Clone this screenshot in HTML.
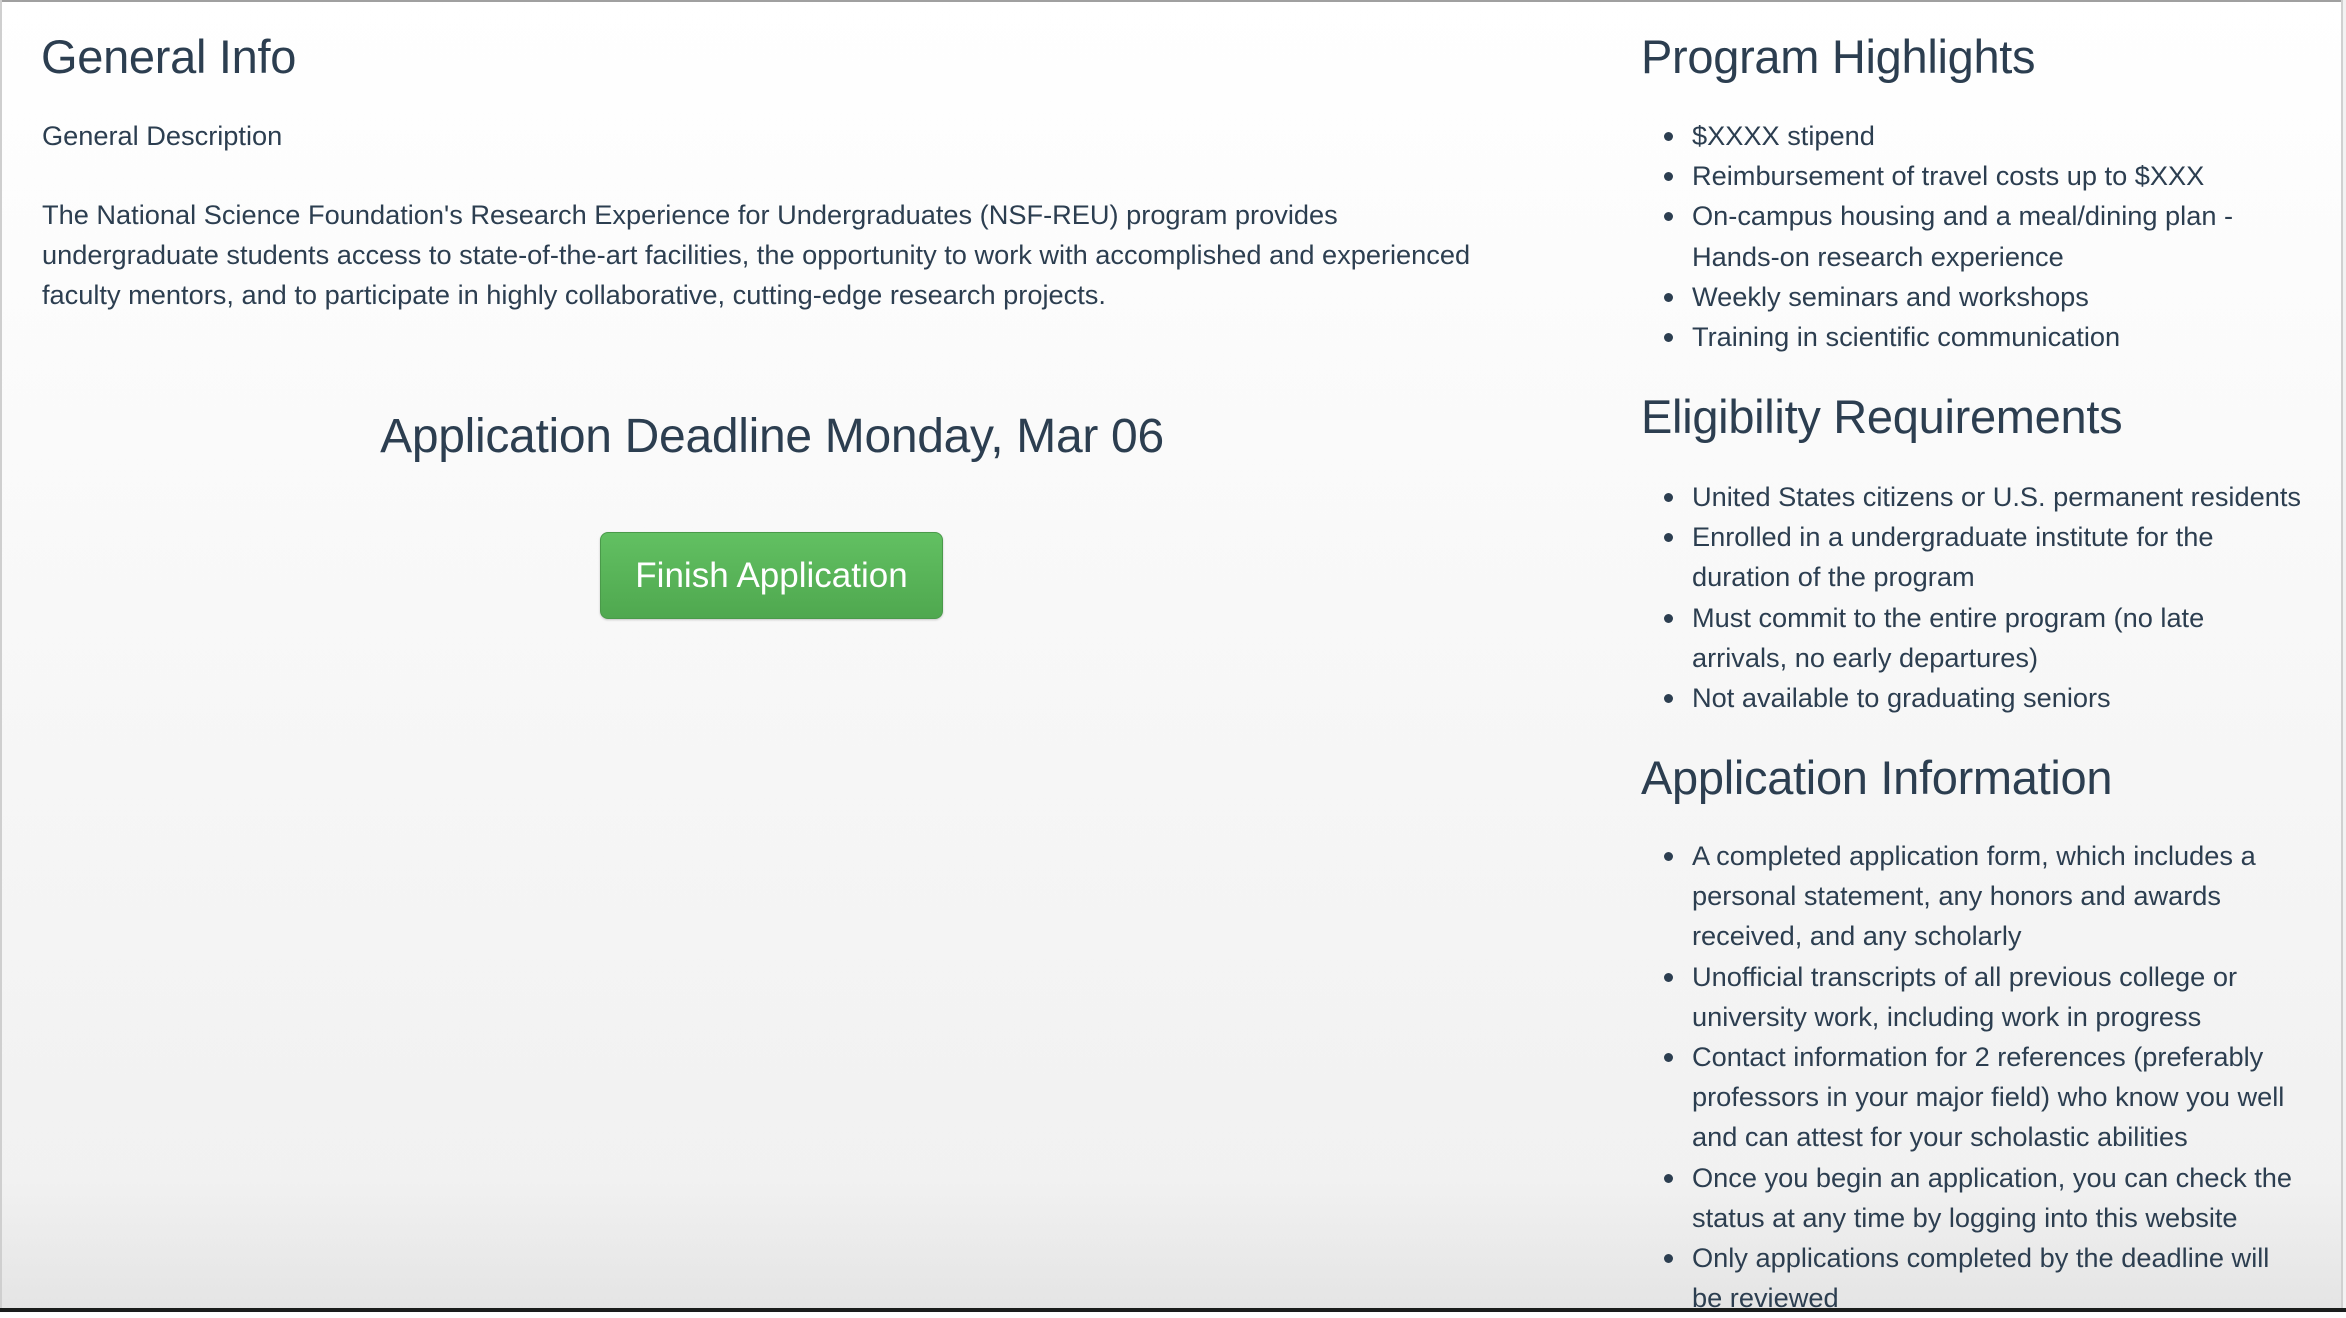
<!DOCTYPE html>
<html><head><meta charset="utf-8"><style>
html,body{margin:0;padding:0}
body{width:2346px;height:1312px;overflow:hidden;position:relative;font-family:"Liberation Sans",Arial,sans-serif;color:#2c3e50;background:linear-gradient(#ffffff 0%,#f9f9f9 40%,#f1f1f1 90%,#e4e4e4 100%)}
.t{position:absolute;white-space:nowrap}
.h{font-size:47px;line-height:56px;letter-spacing:-0.3px}
.p{font-size:27.2px;line-height:40.2px}
ul{position:absolute;margin:0;padding:0;list-style:none;font-size:27.2px;line-height:40.2px;white-space:nowrap}
li{position:relative;padding-left:51px}
li:before{content:"";position:absolute;left:23px;top:16px;width:9px;height:9px;border-radius:50%;background:#2c3e50}
.btn{position:absolute;left:600px;top:532px;width:343px;height:87px;box-sizing:border-box;border:1px solid #4a9a4a;border-radius:8px;background:linear-gradient(#62c062,#4fa84f);color:#fff;font-size:35px;line-height:85px;text-align:center;box-shadow:0 1px 2px rgba(0,0,0,.2)}
</style></head><body>
<div style="position:absolute;left:0;top:0;width:2346px;height:2px;background:#a0a0a0"></div>
<div style="position:absolute;left:0;top:0;width:2px;height:1312px;background:#cfcfcf"></div>
<div style="position:absolute;left:2341px;top:0;width:2px;height:1312px;background:#d0d0d0"></div>
<div style="position:absolute;left:2343px;top:0;width:3px;height:1312px;background:#f2f2f2"></div>
<div style="position:absolute;left:0;top:1308px;width:2346px;height:4px;background:#1a1d1c"></div>

<div class="t h" style="left:41px;top:29px">General Info</div>
<div class="t p" style="left:42px;top:116px">General Description</div>
<div class="t p" style="left:42px;top:195px">The National Science Foundation's Research Experience for Undergraduates (NSF-REU) program provides<br>undergraduate students access to state-of-the-art facilities, the opportunity to work with accomplished and experienced<br>faculty mentors, and to participate in highly collaborative, cutting-edge research projects.</div>
<div class="t h" style="left:272px;width:1000px;text-align:center;top:409px;font-size:48px">Application Deadline Monday, Mar 06</div>
<div class="btn">Finish Application</div>

<div class="t h" style="left:1641px;top:29px">Program Highlights</div>
<ul style="left:1641px;top:116px">
<li>$XXXX stipend</li>
<li>Reimbursement of travel costs up to $XXX</li>
<li>On-campus housing and a meal/dining plan -<br>Hands-on research experience</li>
<li>Weekly seminars and workshops</li>
<li>Training in scientific communication</li>
</ul>
<div class="t h" style="left:1641px;top:389px">Eligibility Requirements</div>
<ul style="left:1641px;top:477px">
<li>United States citizens or U.S. permanent residents</li>
<li>Enrolled in a undergraduate institute for the<br>duration of the program</li>
<li>Must commit to the entire program (no late<br>arrivals, no early departures)</li>
<li>Not available to graduating seniors</li>
</ul>
<div class="t h" style="left:1641px;top:750px">Application Information</div>
<ul style="left:1641px;top:836px">
<li>A completed application form, which includes a<br>personal statement, any honors and awards<br>received, and any scholarly</li>
<li>Unofficial transcripts of all previous college or<br>university work, including work in progress</li>
<li>Contact information for 2 references (preferably<br>professors in your major field) who know you well<br>and can attest for your scholastic abilities</li>
<li>Once you begin an application, you can check the<br>status at any time by logging into this website</li>
<li>Only applications completed by the deadline will<br>be reviewed</li>
</ul>
</body></html>
